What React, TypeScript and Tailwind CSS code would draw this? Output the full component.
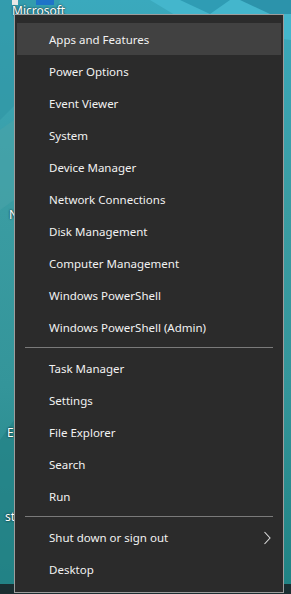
type Item = { label: string; active?: boolean; sub?: boolean };

const groups: Item[][] = [
  [
    { label: 'Apps and Features', active: true },
    { label: 'Power Options' },
    { label: 'Event Viewer' },
    { label: 'System' },
    { label: 'Device Manager' },
    { label: 'Network Connections' },
    { label: 'Disk Management' },
    { label: 'Computer Management' },
    { label: 'Windows PowerShell' },
    { label: 'Windows PowerShell (Admin)' },
  ],
  [
    { label: 'Task Manager' },
    { label: 'Settings' },
    { label: 'File Explorer' },
    { label: 'Search' },
    { label: 'Run' },
  ],
  [{ label: 'Shut down or sign out', sub: true }, { label: 'Desktop' }],
];

function Wallpaper() {
  return (
    <svg className="absolute inset-0" width="291" height="594" viewBox="0 0 291 594">
      <polygon points="150,0 291,0 291,40 200,30" fill="#44b6cc" />
      <polygon points="180,0 230,0 210,14" fill="#2f9cb4" />
      <polygon points="240,0 291,0 291,14 270,14" fill="#2c93ab" />
      <polygon points="0,0 60,0 30,90 0,120" fill="#2f95a4" opacity="0.6" />
      <polygon points="0,130 14,120 14,200 0,210" fill="#49a4a8" opacity="0.6" />
      <polygon points="0,440 14,420 14,584 0,584" fill="#238286" opacity="0.7" />
    </svg>
  );
}

function Chevron() {
  return (
    <svg width="8" height="14" viewBox="0 0 8 14" className="text-[#dcdcdc]">
      <polyline points="1.5,1 7,7 1.5,13" fill="none" stroke="currentColor" strokeWidth="1.1" />
    </svg>
  );
}

export default function App() {
  return (
    <div className="relative w-[291px] h-[594px] overflow-hidden bg-[linear-gradient(180deg,#3aa9bd_0%,#3a9ca2_35%,#34959a_65%,#1f8283_100%)] font-['Noto_Sans','Liberation_Sans',sans-serif]">
      <Wallpaper />

      {/* desktop icon labels peeking out behind the menu */}
      <div className="absolute left-[36px] top-0 w-[18px] h-[5px] bg-[#1e73c8]" />
      <div className="absolute left-[12px] top-0 w-[6px] h-[5px] bg-[#e8e8e8]" />
      <div className="absolute left-[12px] top-[3px] text-[12px] leading-4 text-white [text-shadow:0_0_2px_#000]">Microsoft</div>
      <div className="absolute left-[9px] top-[207px] text-[12px] leading-4 text-white [text-shadow:0_0_2px_#000]">N</div>
      <div className="absolute left-[7px] top-[425px] text-[12px] leading-4 text-white [text-shadow:0_0_2px_#000]">E</div>
      <div className="absolute left-[5px] top-[509px] text-[12px] leading-4 text-white [text-shadow:0_0_2px_#000]">st</div>

      {/* taskbar strip */}
      <div className="absolute left-0 right-0 bottom-0 h-[10px] bg-[#1a2e31]" />

      <div className="absolute left-[14px] top-[14px] w-[270px] h-[579px] bg-[#2b2b2b] border border-[#9d9d9d] px-[2px] pt-[8px]">
        {groups.map((g, gi) => (
          <div key={gi}>
            {gi > 0 && <div className="mx-[8px] my-[4px] h-px bg-[#7a7a7a]" />}
            {g.map((it) => (
              <div
                key={it.label}
                className={`flex items-center h-[32px] pt-px pl-[32px] pr-[10px] text-[11.5px] text-[#f2f2f2] ${
                  it.active ? 'bg-[#414141]' : ''
                }`}
              >
                <span className="flex-1">{it.label}</span>
                {it.sub && <Chevron />}
              </div>
            ))}
          </div>
        ))}
      </div>
    </div>
  );
}
